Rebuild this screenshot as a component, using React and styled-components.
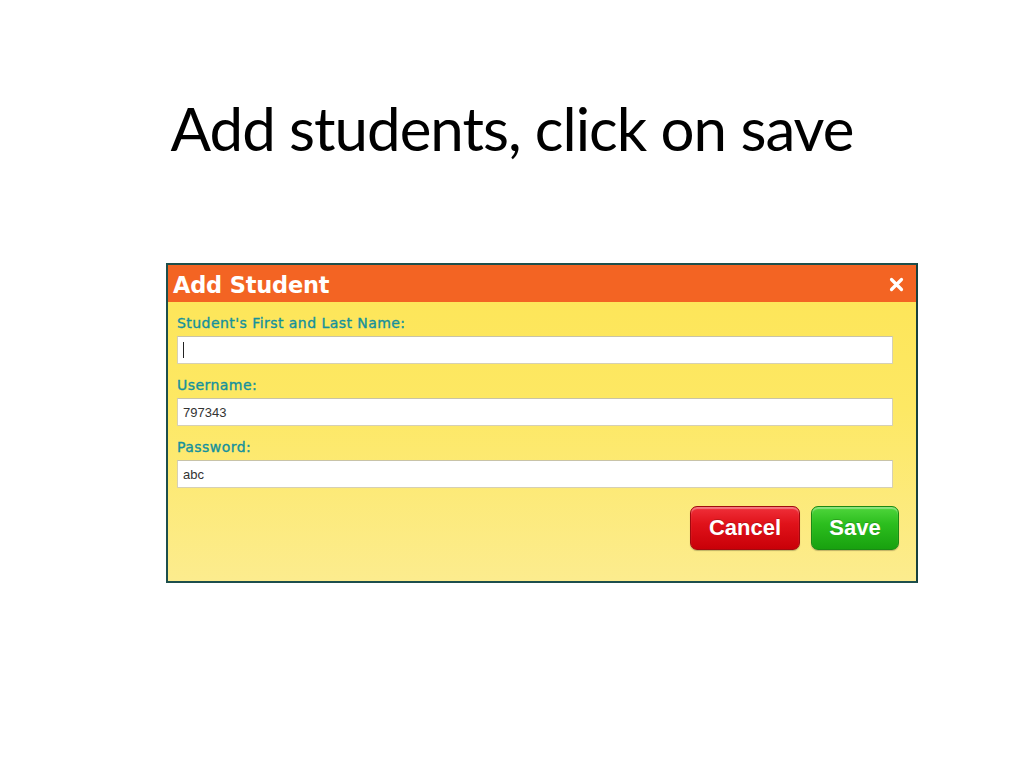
import React, { useState } from "react";
import styled, { createGlobalStyle } from "styled-components";

const GlobalStyle = createGlobalStyle`
    html, body {
        margin: 0;
        padding: 0;
        background: #ffffff;
    }
    * {
        box-sizing: border-box;
    }
`;

export default function App() {
    const [name, setName] = useState("");
    const [username, setUsername] = useState("797343");
    const [password, setPassword] = useState("abc");

    return (
        <Page>
            <GlobalStyle />
            <SlideTitle>Add students, click on save</SlideTitle>
            <Dialog>
                <Header>
                    <HeaderTitle>Add Student</HeaderTitle>
                    <CloseButton aria-label="Close">
                        <svg width="15" height="15" viewBox="0 0 15 15">
                            <path
                                d="M2.5 2.5 L12.5 12.5 M12.5 2.5 L2.5 12.5"
                                stroke="#ffffff"
                                strokeWidth="3.2"
                                strokeLinecap="round"
                            />
                        </svg>
                    </CloseButton>
                </Header>
                <Body>
                    <Field>
                        <Label>Student's First and Last Name:</Label>
                        <TextInput value={name} onChange={(e) => setName(e.target.value)} />
                        <Caret />
                    </Field>
                    <Field>
                        <Label>Username:</Label>
                        <TextInput value={username} onChange={(e) => setUsername(e.target.value)} />
                    </Field>
                    <Field>
                        <Label>Password:</Label>
                        <TextInput value={password} onChange={(e) => setPassword(e.target.value)} />
                    </Field>
                    <ButtonRow>
                        <ActionButton $variant="cancel">Cancel</ActionButton>
                        <ActionButton $variant="save">Save</ActionButton>
                    </ButtonRow>
                </Body>
            </Dialog>
        </Page>
    );
}

const Page = styled.div`
    width: 1024px;
    height: 768px;
    padding-top: 92px;
    background: #ffffff;
`;

const SlideTitle = styled.h1`
    margin: 0;
    text-align: center;
    font-family: Lato, "Open Sans", sans-serif;
    font-weight: 400;
    font-size: 60px;
    letter-spacing: -1px;
    line-height: 72px;
    color: #000000;
`;

const Dialog = styled.div`
    margin: 99px 0 0 166px;
    width: 752px;
    height: 320px;
    border: 2px solid #1d4f4c;
    border-right-color: #17403e;
    background: linear-gradient(to bottom, #fde556 0%, #fde864 45%, #fcec8e 100%);
    display: flex;
    flex-direction: column;
`;

const Header = styled.div`
    height: 37px;
    background: #f36423;
    display: flex;
    align-items: center;
    justify-content: space-between;
    padding: 0 12px 0 5px;
`;

const HeaderTitle = styled.span`
    font-family: "DejaVu Sans", Verdana, sans-serif;
    font-weight: 700;
    font-size: 22.5px;
    color: #ffffff;
    letter-spacing: -0.2px;
    padding-top: 2px;
`;

const CloseButton = styled.span`
    display: flex;
    align-items: center;
    padding-top: 2px;
`;

const Body = styled.div`
    padding: 10px 23px 0 9px;
    display: flex;
    flex-direction: column;
`;

const Field = styled.div`
    position: relative;
    display: flex;
    flex-direction: column;
    margin-bottom: 10px;
`;

const Label = styled.label`
    font-family: "DejaVu Sans", Tahoma, sans-serif;
    font-weight: 400;
    font-size: 14px;
    color: #14919d;
    -webkit-text-stroke: 0.35px #14919d;
    height: 24px;
    line-height: 22px;
    letter-spacing: 0.45px;
`;

const TextInput = styled.input`
    width: 716px;
    height: 28px;
    border: 1px solid #d6d0b4;
    border-top-color: #c8c3a8;
    background: #ffffff;
    font-family: "Liberation Sans", Arial, sans-serif;
    font-size: 13px;
    color: #333333;
    padding: 0 5px;
    outline: none;
`;

const Caret = styled.span`
    position: absolute;
    left: 6px;
    top: 30px;
    width: 1px;
    height: 16px;
    background: #222222;
`;

const ButtonRow = styled.div`
    display: flex;
    justify-content: flex-end;
    gap: 11px;
    margin-top: 8px;
    margin-right: -6px;
`;

const ActionButton = styled.button`
    height: 44px;
    padding: 0;
    width: ${(p) => (p.$variant === "cancel" ? "110px" : "88px")};
    border-radius: 7px;
    border: 1px solid ${(p) => (p.$variant === "cancel" ? "#a10a0e" : "#1a8a14")};
    background: ${(p) =>
        p.$variant === "cancel"
            ? "linear-gradient(to bottom, #f0303a 0%, #e0121a 40%, #c90008 100%)"
            : "linear-gradient(to bottom, #4fd63c 0%, #2cbe1e 40%, #18a10f 100%)"};
    box-shadow: inset 0 2px 1px rgba(255, 255, 255, 0.35), 0 1px 1px rgba(0, 0, 0, 0.25);
    font-family: "Liberation Sans", Arial, sans-serif;
    font-weight: 700;
    font-size: 22px;
    color: #ffffff;
    text-shadow: 0 -1px 0 rgba(0, 0, 0, 0.2);
    cursor: pointer;
`;
